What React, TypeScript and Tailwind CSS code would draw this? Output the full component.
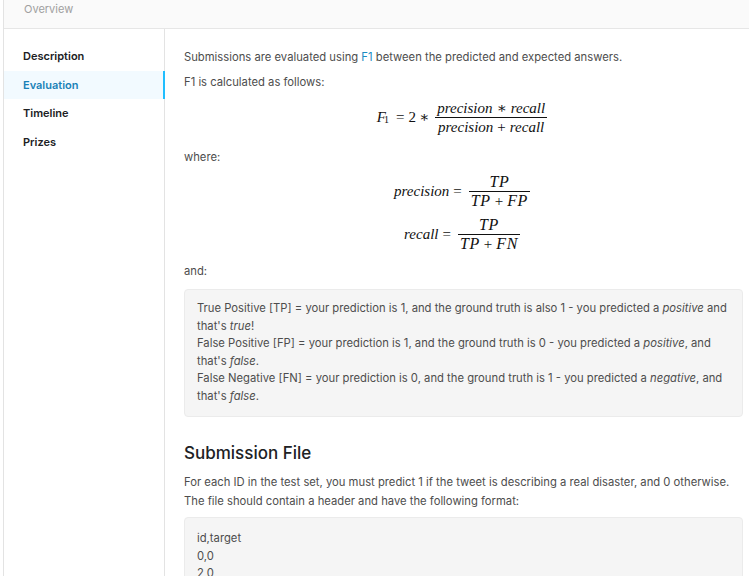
import React from "react";

const mathFont = { fontFamily: '"Liberation Serif", "DejaVu Serif", serif' };

function Frac({ num, den }: { num: React.ReactNode; den: React.ReactNode }) {
  return (
    <span className="inline-flex flex-col items-center align-middle mx-[3px]">
      <span className="px-[2px] leading-[18px]">{num}</span>
      <span className="w-full h-px bg-[#111]"></span>
      <span className="px-[2px] leading-[18px]">{den}</span>
    </span>
  );
}

function I({ children, wide }: { children: React.ReactNode; wide?: boolean }) {
  return <i className={wide ? "text-[16px] tracking-[0.6px]" : ""}>{children}</i>;
}

function Op({ c }: { c: string }) {
  return <span className="mx-[4px]">{c}</span>;
}

export default function App() {
  const nav = ["Description", "Evaluation", "Timeline", "Prizes"];
  return (
    <div
      className="min-h-[576px] w-[746px] bg-white ml-[3px] border-l border-[#e3e3e3] overflow-hidden"
      style={{ fontFamily: 'Inter, "Noto Sans", sans-serif' }}
    >
      <div className="h-[29px] bg-[#fafafa] border-b border-[#e6e6e6] pl-[20px] pt-[2px] text-[11px] leading-[15px] text-[#a0a0a0]">
        Overview
      </div>
      <div className="flex">
        <div className="w-[161px] shrink-0 border-r border-[#e3e3e3] pt-[13px] min-h-[548px]">
          {nav.map((n) => (
            <div
              key={n}
              className={
                n === "Evaluation"
                  ? "h-[28.7px] flex items-center pl-[19px] text-[11px] font-semibold text-[#1a82b8] bg-[#f2faff] border-r-2 border-[#20beff] -mr-px"
                  : "h-[28.7px] flex items-center pl-[19px] text-[11px] font-semibold text-[#202124]"
              }
            >
              {n}
            </div>
          ))}
        </div>
        <div className="flex-1 pl-[19px] pr-[6px] pt-[19px] text-[11.25px] text-[#4d4d4d]">
          <p className="leading-[19px]">
            Submissions are evaluated using <span className="text-[#1a8cc2]">F1</span> between the predicted and expected answers.
          </p>
          <p className="leading-[19px] mt-[6px]">F1 is calculated as follows:</p>
          <div className="flex justify-center items-center mt-[2px] text-[15px] text-[#111] h-[46px]" style={mathFont}>
            <span className="inline-flex items-center">
              <I>F</I>
              <sub className="text-[10px] -ml-[2px] mr-[3px]">1</sub>
              <Op c="=" />
              <span>2</span>
              <span className="mx-[3px]">∗</span>
              <Frac
                num={<><I>precision</I><Op c="∗" /><I>recall</I></>}
                den={<><I>precision</I><Op c="+" /><I>recall</I></>}
              />
            </span>
          </div>
          <p className="leading-[19px] mt-[8px]">where:</p>
          <div className="flex flex-col items-center text-[15px] text-[#111] mt-[4px]" style={mathFont}>
            <span className="inline-flex items-center h-[40px]">
              <I>precision</I>
              <Op c="=" />
              <Frac num={<I wide>TP</I>} den={<><I wide>TP</I><Op c="+" /><I wide>FP</I></>} />
            </span>
            <span className="inline-flex items-center h-[40px] mt-[3px]">
              <I>recall</I>
              <Op c="=" />
              <Frac num={<I wide>TP</I>} den={<><I wide>TP</I><Op c="+" /><I wide>FN</I></>} />
            </span>
          </div>
          <p className="leading-[19px] mt-[8px]">and:</p>
          <div className="mt-[8px] bg-[#f5f5f5] border border-[#ebebeb] rounded-[4px] pl-[12px] pr-[12px] pt-[10px] pb-[11px] leading-[17.5px]">
            <div>
              True Positive [TP] = your prediction is 1, and the ground truth is also 1 - you predicted a <i>positive</i> and that's <i>true</i>!
            </div>
            <div>
              False Positive [FP] = your prediction is 1, and the ground truth is 0 - you predicted a <i>positive</i>, and that's <i>false</i>.
            </div>
            <div>
              False Negative [FN] = your prediction is 0, and the ground truth is 1 - you predicted a <i>negative</i>, and that's <i>false</i>.
            </div>
          </div>
          <h2 className="mt-[24px] text-[17px] font-medium text-[#202124] leading-[24px]">Submission File</h2>
          <p className="mt-[8px] leading-[19px]">
            For each ID in the test set, you must predict 1 if the tweet is describing a real disaster, and 0 otherwise. The file should contain a header and have the following format:
          </p>
          <div className="mt-[6px] bg-[#f5f5f5] border border-[#ebebeb] rounded-[4px] pl-[12px] pt-[12px] pb-[11px] leading-[17.5px]">
            <div>id,target</div>
            <div>0,0</div>
            <div>2,0</div>
            <div>3,1</div>
          </div>
        </div>
      </div>
    </div>
  );
}
